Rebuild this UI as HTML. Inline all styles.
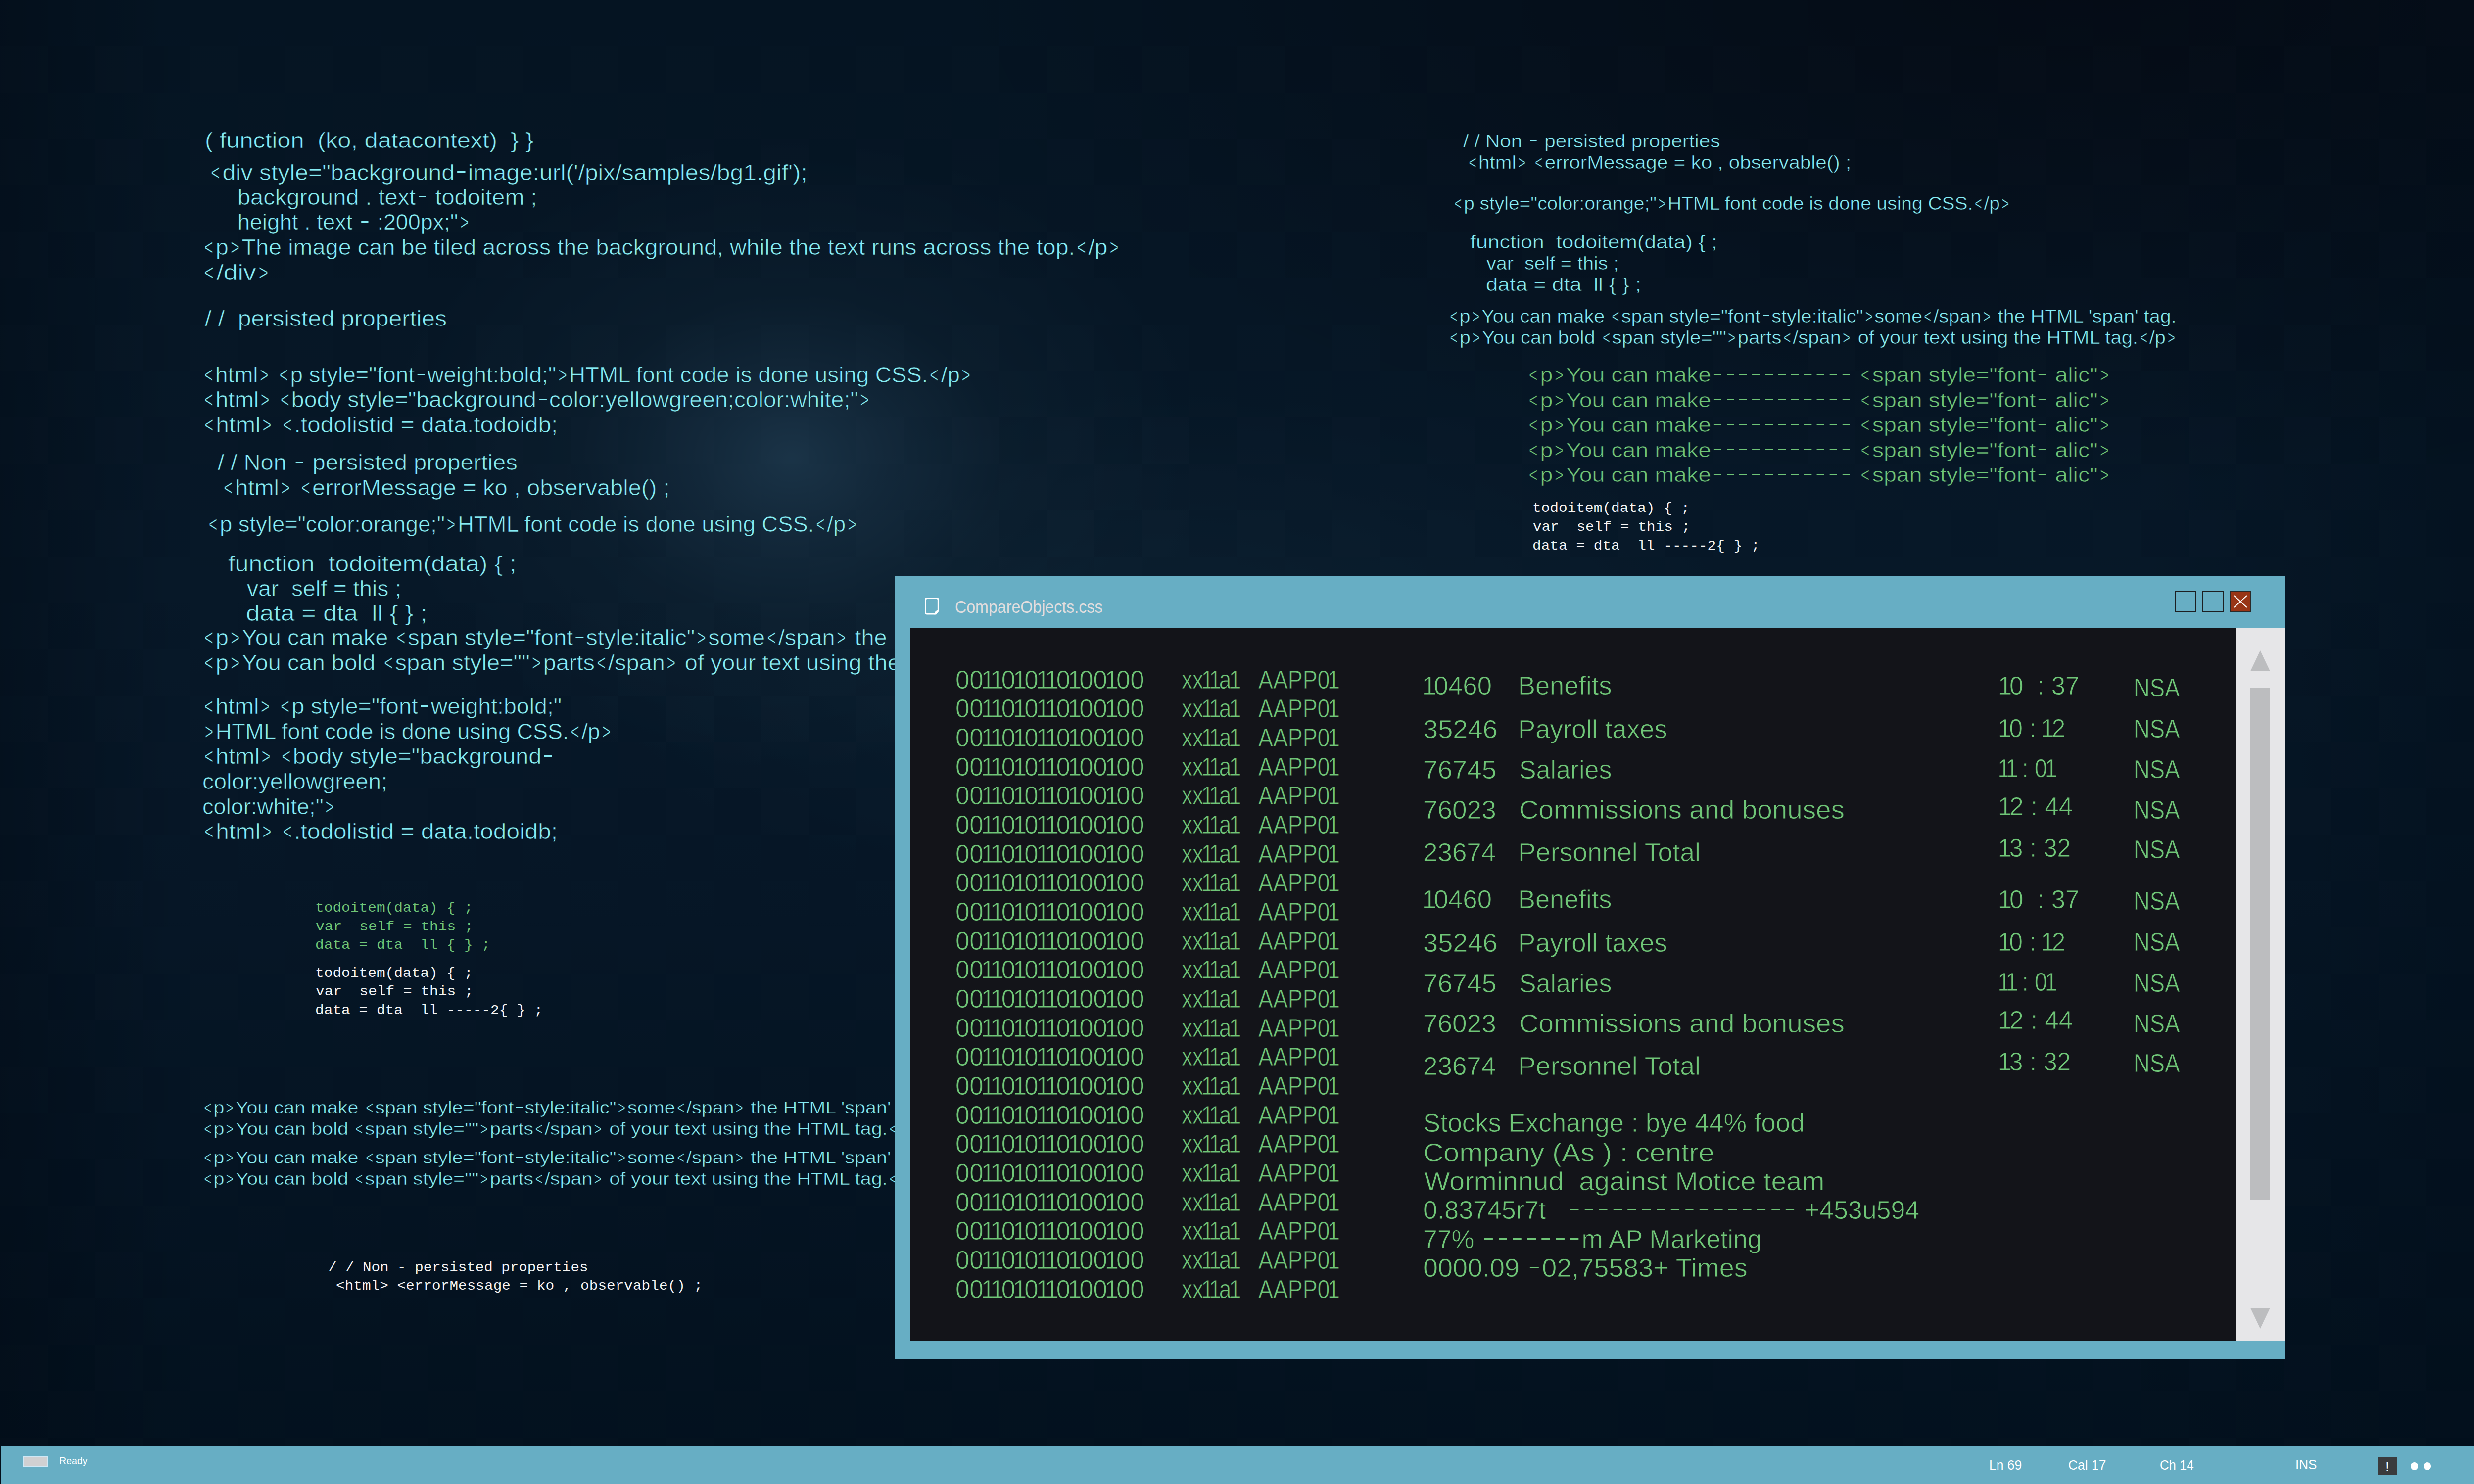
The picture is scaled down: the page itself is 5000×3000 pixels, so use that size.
<!DOCTYPE html>
<html><head><meta charset="utf-8">
<style>
html,body{margin:0;padding:0;width:5000px;height:3000px;overflow:hidden;}
body{position:relative;background:#06121e;font-family:"Liberation Sans",sans-serif;}
#bg{position:absolute;left:0;top:0;width:5000px;height:3000px;
 background:
  radial-gradient(ellipse 820px 640px at 1600px 928px, rgba(28,54,74,0.9) 0%, rgba(25,49,68,0.62) 24%, rgba(20,42,58,0.3) 52%, rgba(14,30,44,0) 100%),
  radial-gradient(ellipse 1200px 520px at 2350px 1300px, rgba(16,38,54,0.5) 0%, rgba(16,38,54,0) 100%),
  radial-gradient(ellipse 2300px 1100px at 4200px -100px, rgba(5,9,18,0.8) 0%, rgba(5,9,18,0) 100%),
  linear-gradient(270deg, rgba(2,14,26,0.5) 0px, rgba(2,14,26,0) 700px),
  linear-gradient(90deg, rgba(2,10,20,0.45) 0px, rgba(2,10,20,0) 350px),
  linear-gradient(180deg, #051422 0%, #071828 40%, #061626 62%, #03111e 100%);}
.s,.m{position:absolute;white-space:pre;line-height:1;transform-origin:0 0;}
.s{font-family:"Liberation Sans",sans-serif;}
.n1{margin:0 -0.1em}
.lt{display:inline-block;width:0.57em;padding-left:0.136em;box-sizing:border-box;transform:scaleX(0.646);transform-origin:0 0}
.dh{display:inline-block;width:0.33em;height:0.06em;margin:0 0.115em;background:currentColor;vertical-align:0.33em}
.m{font-family:"Liberation Mono",monospace;}
#topline{position:absolute;left:0;top:0;width:5000px;height:1px;background:#38414d;}
#win{position:absolute;left:1808px;top:1165px;width:2810px;height:1583px;background:#67aec4;}
#content{position:absolute;left:1839px;top:1270px;width:2680px;height:1440px;background:#131419;}
#sb{position:absolute;left:4518px;top:1270px;width:100px;height:1440px;background:#e6e6e8;border-left:2px solid #f8f8f8;box-sizing:border-box;}
#thumb{position:absolute;left:4548px;top:1391px;width:40px;height:1034px;background:#bcbdbf;}
.tri{position:absolute;width:0;height:0;border-left:20px solid transparent;border-right:20px solid transparent;}
#up{left:4548px;top:1315px;border-bottom:42px solid #bcbdbf;}
#down{left:4548px;top:2644px;border-top:42px solid #bcbdbf;}
.btn{position:absolute;top:1194px;width:43px;height:43px;box-sizing:border-box;border:2px solid #1c1f22;}
#status{position:absolute;left:2px;top:2923px;width:4998px;height:77px;background:#67aec4;}
.st{position:absolute;white-space:pre;line-height:1;color:#fff;font-family:"Liberation Sans",sans-serif;}
</style></head><body>
<div id="bg"></div>
<div id="topline"></div>
<div class="s" style="left:414.0px;top:261.6px;font-size:44px;color:#85ebf3;transform:scaleX(1.1085);-webkit-text-stroke:0.7px #051523">( function  (ko, datacontext)  } }</div>
<div class="s" style="left:421.6px;top:326.6px;font-size:44px;color:#85ebf3;transform:scaleX(1.0916);-webkit-text-stroke:0.7px #061524"><span class="lt">&lt;</span>div style=&quot;background<span class="dh"></span>image:url(&#x27;/pix/samples/bg1.gif&#x27;);</div>
<div class="s" style="left:480.2px;top:377.0px;font-size:44px;color:#85ebf3;transform:scaleX(1.0670);-webkit-text-stroke:0.7px #061524">background . text<span class="dh"></span> todoitem ;</div>
<div class="s" style="left:480.3px;top:427.2px;font-size:44px;color:#85ebf3;transform:scaleX(1.0212);-webkit-text-stroke:0.7px #061524">height . text <span class="dh"></span> :200px;&quot;<span class="lt">&gt;</span></div>
<div class="s" style="left:409.0px;top:478.0px;font-size:44px;color:#85ebf3;transform:scaleX(1.0643);-webkit-text-stroke:0.7px #071726"><span class="lt">&lt;</span>p<span class="lt">&gt;</span>The image can be tiled across the background, while the text runs across the top.<span class="lt">&lt;</span>/p<span class="lt">&gt;</span></div>
<div class="s" style="left:408.2px;top:528.6px;font-size:44px;color:#85ebf3;transform:scaleX(1.1722);-webkit-text-stroke:0.7px #061625"><span class="lt">&lt;</span>/div<span class="lt">&gt;</span></div>
<div class="s" style="left:413.6px;top:622.1px;font-size:44px;color:#85ebf3;transform:scaleX(1.0928);-webkit-text-stroke:0.7px #061625">/ /  persisted properties</div>
<div class="s" style="left:408.9px;top:735.7px;font-size:44px;color:#85ebf3;transform:scaleX(1.0398);-webkit-text-stroke:0.7px #091b2a"><span class="lt">&lt;</span>html<span class="lt">&gt;</span> <span class="lt">&lt;</span>p style=&quot;font<span class="dh"></span>weight:bold;&quot;<span class="lt">&gt;</span>HTML font code is done using CSS.<span class="lt">&lt;</span>/p<span class="lt">&gt;</span></div>
<div class="s" style="left:408.8px;top:786.3px;font-size:44px;color:#85ebf3;transform:scaleX(1.0544);-webkit-text-stroke:0.7px #091b2a"><span class="lt">&lt;</span>html<span class="lt">&gt;</span> <span class="lt">&lt;</span>body style=&quot;background<span class="dh"></span>color:yellowgreen;color:white;&quot;<span class="lt">&gt;</span></div>
<div class="s" style="left:408.7px;top:836.8px;font-size:44px;color:#85ebf3;transform:scaleX(1.0867);-webkit-text-stroke:0.7px #071727"><span class="lt">&lt;</span>html<span class="lt">&gt;</span> <span class="lt">&lt;</span>.todolistid = data.todoidb;</div>
<div class="s" style="left:440.3px;top:913.3px;font-size:44px;color:#85ebf3;transform:scaleX(1.0722);-webkit-text-stroke:0.7px #071727">/ / Non <span class="dh"></span> persisted properties</div>
<div class="s" style="left:448.4px;top:963.7px;font-size:44px;color:#85ebf3;transform:scaleX(1.0726);-webkit-text-stroke:0.7px #081929"><span class="lt">&lt;</span>html<span class="lt">&gt;</span> <span class="lt">&lt;</span>errorMessage = ko , observable() ;</div>
<div class="s" style="left:417.6px;top:1038.1px;font-size:44px;color:#85ebf3;transform:scaleX(1.0324);-webkit-text-stroke:0.7px #0a1b2b"><span class="lt">&lt;</span>p style=&quot;color:orange;&quot;<span class="lt">&gt;</span>HTML font code is done using CSS.<span class="lt">&lt;</span>/p<span class="lt">&gt;</span></div>
<div class="s" style="left:460.7px;top:1117.8px;font-size:44px;color:#85ebf3;transform:scaleX(1.1343);-webkit-text-stroke:0.7px #071828">function  todoitem(data) { ;</div>
<div class="s" style="left:499.0px;top:1167.6px;font-size:44px;color:#85ebf3;transform:scaleX(1.0503);-webkit-text-stroke:0.7px #071828">var  self = this ;</div>
<div class="s" style="left:496.7px;top:1218.1px;font-size:44px;color:#85ebf3;transform:scaleX(1.1481);-webkit-text-stroke:0.7px #071828">data = dta  ll { } ;</div>
<div class="s" style="left:409.3px;top:1267.4px;font-size:44px;color:#85ebf3;transform:scaleX(1.0670);-webkit-text-stroke:0.7px #081a2a"><span class="lt">&lt;</span>p<span class="lt">&gt;</span>You can make <span class="lt">&lt;</span>span style=&quot;font<span class="dh"></span>style:italic&quot;<span class="lt">&gt;</span>some<span class="lt">&lt;</span>/span<span class="lt">&gt;</span> the HTML &#x27;span&#x27; tag.</div>
<div class="s" style="left:409.3px;top:1317.5px;font-size:44px;color:#85ebf3;transform:scaleX(1.0678);-webkit-text-stroke:0.7px #081929"><span class="lt">&lt;</span>p<span class="lt">&gt;</span>You can bold <span class="lt">&lt;</span>span style=&quot;&quot;<span class="lt">&gt;</span>parts<span class="lt">&lt;</span>/span<span class="lt">&gt;</span> of your text using the HTML tag.<span class="lt">&lt;</span>/p<span class="lt">&gt;</span></div>
<div class="s" style="left:409.3px;top:1406.4px;font-size:44px;color:#85ebf3;transform:scaleX(1.0564);-webkit-text-stroke:0.7px #071727"><span class="lt">&lt;</span>html<span class="lt">&gt;</span> <span class="lt">&lt;</span>p style=&quot;font<span class="dh"></span>weight:bold;&quot;</div>
<div class="s" style="left:410.3px;top:1456.6px;font-size:44px;color:#85ebf3;transform:scaleX(1.0229);-webkit-text-stroke:0.7px #071727"><span class="lt">&gt;</span>HTML font code is done using CSS.<span class="lt">&lt;</span>/p<span class="lt">&gt;</span></div>
<div class="s" style="left:409.2px;top:1507.1px;font-size:44px;color:#85ebf3;transform:scaleX(1.0711);-webkit-text-stroke:0.7px #061727"><span class="lt">&lt;</span>html<span class="lt">&gt;</span> <span class="lt">&lt;</span>body style=&quot;background<span class="dh"></span></div>
<div class="s" style="left:408.5px;top:1558.2px;font-size:44px;color:#85ebf3;transform:scaleX(1.0547);-webkit-text-stroke:0.7px #061727">color:yellowgreen;</div>
<div class="s" style="left:408.5px;top:1608.5px;font-size:44px;color:#85ebf3;transform:scaleX(1.0275);-webkit-text-stroke:0.7px #061727">color:white;&quot;<span class="lt">&gt;</span></div>
<div class="s" style="left:409.2px;top:1658.8px;font-size:44px;color:#85ebf3;transform:scaleX(1.0862);-webkit-text-stroke:0.7px #061727"><span class="lt">&lt;</span>html<span class="lt">&gt;</span> <span class="lt">&lt;</span>.todolistid = data.todoidb;</div>
<div class="m" style="left:637.1px;top:1822.2px;font-size:28px;color:#6fc577;transform:scaleX(1.0535)">todoitem(data) { ;</div>
<div class="m" style="left:638.1px;top:1859.5px;font-size:28px;color:#6fc577;transform:scaleX(1.0535)">var  self = this ;</div>
<div class="m" style="left:637.1px;top:1896.9px;font-size:28px;color:#6fc577;transform:scaleX(1.0535)">data = dta  ll { } ;</div>
<div class="m" style="left:637.1px;top:1953.5px;font-size:28px;color:#f4f4f4;transform:scaleX(1.0535)">todoitem(data) { ;</div>
<div class="m" style="left:638.1px;top:1990.9px;font-size:28px;color:#f4f4f4;transform:scaleX(1.0535)">var  self = this ;</div>
<div class="m" style="left:637.1px;top:2029.3px;font-size:28px;color:#f4f4f4;transform:scaleX(1.0535)">data = dta  ll -----2{ } ;</div>
<div class="s" style="left:409.3px;top:2220.6px;font-size:35px;color:#85ebf3;transform:scaleX(1.1274);-webkit-text-stroke:0.56px #051423"><span class="lt">&lt;</span>p<span class="lt">&gt;</span>You can make <span class="lt">&lt;</span>span style=&quot;font<span class="dh"></span>style:italic&quot;<span class="lt">&gt;</span>some<span class="lt">&lt;</span>/span<span class="lt">&gt;</span> the HTML &#x27;span&#x27; tag.</div>
<div class="s" style="left:409.3px;top:2263.8px;font-size:35px;color:#85ebf3;transform:scaleX(1.1326);-webkit-text-stroke:0.56px #051423"><span class="lt">&lt;</span>p<span class="lt">&gt;</span>You can bold <span class="lt">&lt;</span>span style=&quot;&quot;<span class="lt">&gt;</span>parts<span class="lt">&lt;</span>/span<span class="lt">&gt;</span> of your text using the HTML tag.<span class="lt">&lt;</span>/p<span class="lt">&gt;</span></div>
<div class="s" style="left:409.3px;top:2321.8px;font-size:35px;color:#85ebf3;transform:scaleX(1.1274);-webkit-text-stroke:0.56px #051423"><span class="lt">&lt;</span>p<span class="lt">&gt;</span>You can make <span class="lt">&lt;</span>span style=&quot;font<span class="dh"></span>style:italic&quot;<span class="lt">&gt;</span>some<span class="lt">&lt;</span>/span<span class="lt">&gt;</span> the HTML &#x27;span&#x27; tag.</div>
<div class="s" style="left:409.3px;top:2365.1px;font-size:35px;color:#85ebf3;transform:scaleX(1.1326);-webkit-text-stroke:0.56px #051422"><span class="lt">&lt;</span>p<span class="lt">&gt;</span>You can bold <span class="lt">&lt;</span>span style=&quot;&quot;<span class="lt">&gt;</span>parts<span class="lt">&lt;</span>/span<span class="lt">&gt;</span> of your text using the HTML tag.<span class="lt">&lt;</span>/p<span class="lt">&gt;</span></div>
<div class="m" style="left:663.3px;top:2549.1px;font-size:28px;color:#f4f4f4;transform:scaleX(1.0423)">/ / Non - persisted properties</div>
<div class="m" style="left:679.3px;top:2585.7px;font-size:28px;color:#f4f4f4;transform:scaleX(1.0502)">&lt;html&gt; &lt;errorMessage = ko , observable() ;</div>
<div class="s" style="left:2957.4px;top:267.2px;font-size:37px;color:#85ebf3;transform:scaleX(1.0932);-webkit-text-stroke:0.59px #05111d">/ / Non <span class="dh"></span> persisted properties</div>
<div class="s" style="left:2964.7px;top:310.4px;font-size:37px;color:#85ebf3;transform:scaleX(1.0932);-webkit-text-stroke:0.59px #06111d"><span class="lt">&lt;</span>html<span class="lt">&gt;</span> <span class="lt">&lt;</span>errorMessage = ko , observable() ;</div>
<div class="s" style="left:2935.8px;top:392.9px;font-size:37px;color:#85ebf3;transform:scaleX(1.0515);-webkit-text-stroke:0.59px #06111e"><span class="lt">&lt;</span>p style=&quot;color:orange;&quot;<span class="lt">&gt;</span>HTML font code is done using CSS.<span class="lt">&lt;</span>/p<span class="lt">&gt;</span></div>
<div class="s" style="left:2971.4px;top:471.1px;font-size:37px;color:#85ebf3;transform:scaleX(1.1569);-webkit-text-stroke:0.59px #061320">function  todoitem(data) { ;</div>
<div class="s" style="left:3004.2px;top:514.1px;font-size:37px;color:#85ebf3;transform:scaleX(1.0709);-webkit-text-stroke:0.59px #061321">var  self = this ;</div>
<div class="s" style="left:3003.0px;top:557.4px;font-size:37px;color:#85ebf3;transform:scaleX(1.1691);-webkit-text-stroke:0.59px #061421">data = dta  ll { } ;</div>
<div class="s" style="left:2926.7px;top:620.5px;font-size:37px;color:#85ebf3;transform:scaleX(1.0690);-webkit-text-stroke:0.59px #061321"><span class="lt">&lt;</span>p<span class="lt">&gt;</span>You can make <span class="lt">&lt;</span>span style=&quot;font<span class="dh"></span>style:italic&quot;<span class="lt">&gt;</span>some<span class="lt">&lt;</span>/span<span class="lt">&gt;</span> the HTML &#x27;span&#x27; tag.</div>
<div class="s" style="left:2926.7px;top:663.5px;font-size:37px;color:#85ebf3;transform:scaleX(1.0784);-webkit-text-stroke:0.59px #061422"><span class="lt">&lt;</span>p<span class="lt">&gt;</span>You can bold <span class="lt">&lt;</span>span style=&quot;&quot;<span class="lt">&gt;</span>parts<span class="lt">&lt;</span>/span<span class="lt">&gt;</span> of your text using the HTML tag.<span class="lt">&lt;</span>/p<span class="lt">&gt;</span></div>
<div class="s" style="left:3086.4px;top:738.4px;font-size:41px;color:#6fc577;transform:scaleX(1.1348);-webkit-text-stroke:0.65px #061523"><span class="lt">&lt;</span>p<span class="lt">&gt;</span>You can make<span class="dh"></span><span class="dh"></span><span class="dh"></span><span class="dh"></span><span class="dh"></span><span class="dh"></span><span class="dh"></span><span class="dh"></span><span class="dh"></span><span class="dh"></span><span class="dh"></span> <span class="lt">&lt;</span>span style=&quot;font<span class="dh"></span> alic&quot;<span class="lt">&gt;</span></div>
<div class="s" style="left:3086.4px;top:788.9px;font-size:41px;color:#6fc577;transform:scaleX(1.1348);-webkit-text-stroke:0.65px #061524"><span class="lt">&lt;</span>p<span class="lt">&gt;</span>You can make<span class="dh"></span><span class="dh"></span><span class="dh"></span><span class="dh"></span><span class="dh"></span><span class="dh"></span><span class="dh"></span><span class="dh"></span><span class="dh"></span><span class="dh"></span><span class="dh"></span> <span class="lt">&lt;</span>span style=&quot;font<span class="dh"></span> alic&quot;<span class="lt">&gt;</span></div>
<div class="s" style="left:3086.4px;top:839.2px;font-size:41px;color:#6fc577;transform:scaleX(1.1348);-webkit-text-stroke:0.65px #061625"><span class="lt">&lt;</span>p<span class="lt">&gt;</span>You can make<span class="dh"></span><span class="dh"></span><span class="dh"></span><span class="dh"></span><span class="dh"></span><span class="dh"></span><span class="dh"></span><span class="dh"></span><span class="dh"></span><span class="dh"></span><span class="dh"></span> <span class="lt">&lt;</span>span style=&quot;font<span class="dh"></span> alic&quot;<span class="lt">&gt;</span></div>
<div class="s" style="left:3086.4px;top:889.5px;font-size:41px;color:#6fc577;transform:scaleX(1.1348);-webkit-text-stroke:0.65px #071626"><span class="lt">&lt;</span>p<span class="lt">&gt;</span>You can make<span class="dh"></span><span class="dh"></span><span class="dh"></span><span class="dh"></span><span class="dh"></span><span class="dh"></span><span class="dh"></span><span class="dh"></span><span class="dh"></span><span class="dh"></span><span class="dh"></span> <span class="lt">&lt;</span>span style=&quot;font<span class="dh"></span> alic&quot;<span class="lt">&gt;</span></div>
<div class="s" style="left:3086.4px;top:939.9px;font-size:41px;color:#6fc577;transform:scaleX(1.1348);-webkit-text-stroke:0.65px #071727"><span class="lt">&lt;</span>p<span class="lt">&gt;</span>You can make<span class="dh"></span><span class="dh"></span><span class="dh"></span><span class="dh"></span><span class="dh"></span><span class="dh"></span><span class="dh"></span><span class="dh"></span><span class="dh"></span><span class="dh"></span><span class="dh"></span> <span class="lt">&lt;</span>span style=&quot;font<span class="dh"></span> alic&quot;<span class="lt">&gt;</span></div>
<div class="m" style="left:3097.1px;top:1014.2px;font-size:28px;color:#f4f4f4;transform:scaleX(1.0522)">todoitem(data) { ;</div>
<div class="m" style="left:3098.1px;top:1051.9px;font-size:28px;color:#f4f4f4;transform:scaleX(1.0522)">var  self = this ;</div>
<div class="m" style="left:3097.1px;top:1089.5px;font-size:28px;color:#f4f4f4;transform:scaleX(1.0522)">data = dta  ll -----2{ } ;</div>
<div id="win"></div>
<div id="content"></div>
<div id="sb"></div>
<div id="thumb"></div>
<div id="up" class="tri"></div>
<div id="down" class="tri"></div>
<div class="s" style="left:1930.7px;top:1348.7px;font-size:51px;color:#6fc577;transform:scaleX(0.9971);-webkit-text-stroke:0.81px #131419">00<span class="n1">1</span><span class="n1">1</span>0<span class="n1">1</span>0<span class="n1">1</span><span class="n1">1</span>0<span class="n1">1</span>00<span class="n1">1</span>00</div>
<div class="s" style="left:2387.7px;top:1348.7px;font-size:51px;color:#6fc577;transform:scaleX(0.8662);-webkit-text-stroke:0.81px #131419">xx<span class="n1">1</span><span class="n1">1</span>a<span class="n1">1</span></div>
<div class="s" style="left:2543.2px;top:1348.7px;font-size:51px;color:#6fc577;transform:scaleX(0.8784);-webkit-text-stroke:0.81px #131419">AAPP0<span class="n1">1</span></div>
<div class="s" style="left:1930.7px;top:1407.3px;font-size:51px;color:#6fc577;transform:scaleX(0.9971);-webkit-text-stroke:0.81px #131419">00<span class="n1">1</span><span class="n1">1</span>0<span class="n1">1</span>0<span class="n1">1</span><span class="n1">1</span>0<span class="n1">1</span>00<span class="n1">1</span>00</div>
<div class="s" style="left:2387.7px;top:1407.3px;font-size:51px;color:#6fc577;transform:scaleX(0.8662);-webkit-text-stroke:0.81px #131419">xx<span class="n1">1</span><span class="n1">1</span>a<span class="n1">1</span></div>
<div class="s" style="left:2543.2px;top:1407.3px;font-size:51px;color:#6fc577;transform:scaleX(0.8784);-webkit-text-stroke:0.81px #131419">AAPP0<span class="n1">1</span></div>
<div class="s" style="left:1930.7px;top:1466.0px;font-size:51px;color:#6fc577;transform:scaleX(0.9971);-webkit-text-stroke:0.81px #131419">00<span class="n1">1</span><span class="n1">1</span>0<span class="n1">1</span>0<span class="n1">1</span><span class="n1">1</span>0<span class="n1">1</span>00<span class="n1">1</span>00</div>
<div class="s" style="left:2387.7px;top:1466.0px;font-size:51px;color:#6fc577;transform:scaleX(0.8662);-webkit-text-stroke:0.81px #131419">xx<span class="n1">1</span><span class="n1">1</span>a<span class="n1">1</span></div>
<div class="s" style="left:2543.2px;top:1466.0px;font-size:51px;color:#6fc577;transform:scaleX(0.8784);-webkit-text-stroke:0.81px #131419">AAPP0<span class="n1">1</span></div>
<div class="s" style="left:1930.7px;top:1524.6px;font-size:51px;color:#6fc577;transform:scaleX(0.9971);-webkit-text-stroke:0.81px #131419">00<span class="n1">1</span><span class="n1">1</span>0<span class="n1">1</span>0<span class="n1">1</span><span class="n1">1</span>0<span class="n1">1</span>00<span class="n1">1</span>00</div>
<div class="s" style="left:2387.7px;top:1524.6px;font-size:51px;color:#6fc577;transform:scaleX(0.8662);-webkit-text-stroke:0.81px #131419">xx<span class="n1">1</span><span class="n1">1</span>a<span class="n1">1</span></div>
<div class="s" style="left:2543.2px;top:1524.6px;font-size:51px;color:#6fc577;transform:scaleX(0.8784);-webkit-text-stroke:0.81px #131419">AAPP0<span class="n1">1</span></div>
<div class="s" style="left:1930.7px;top:1583.3px;font-size:51px;color:#6fc577;transform:scaleX(0.9971);-webkit-text-stroke:0.81px #131419">00<span class="n1">1</span><span class="n1">1</span>0<span class="n1">1</span>0<span class="n1">1</span><span class="n1">1</span>0<span class="n1">1</span>00<span class="n1">1</span>00</div>
<div class="s" style="left:2387.7px;top:1583.3px;font-size:51px;color:#6fc577;transform:scaleX(0.8662);-webkit-text-stroke:0.81px #131419">xx<span class="n1">1</span><span class="n1">1</span>a<span class="n1">1</span></div>
<div class="s" style="left:2543.2px;top:1583.3px;font-size:51px;color:#6fc577;transform:scaleX(0.8784);-webkit-text-stroke:0.81px #131419">AAPP0<span class="n1">1</span></div>
<div class="s" style="left:1930.7px;top:1642.0px;font-size:51px;color:#6fc577;transform:scaleX(0.9971);-webkit-text-stroke:0.81px #131419">00<span class="n1">1</span><span class="n1">1</span>0<span class="n1">1</span>0<span class="n1">1</span><span class="n1">1</span>0<span class="n1">1</span>00<span class="n1">1</span>00</div>
<div class="s" style="left:2387.7px;top:1642.0px;font-size:51px;color:#6fc577;transform:scaleX(0.8662);-webkit-text-stroke:0.81px #131419">xx<span class="n1">1</span><span class="n1">1</span>a<span class="n1">1</span></div>
<div class="s" style="left:2543.2px;top:1642.0px;font-size:51px;color:#6fc577;transform:scaleX(0.8784);-webkit-text-stroke:0.81px #131419">AAPP0<span class="n1">1</span></div>
<div class="s" style="left:1930.7px;top:1700.6px;font-size:51px;color:#6fc577;transform:scaleX(0.9971);-webkit-text-stroke:0.81px #131419">00<span class="n1">1</span><span class="n1">1</span>0<span class="n1">1</span>0<span class="n1">1</span><span class="n1">1</span>0<span class="n1">1</span>00<span class="n1">1</span>00</div>
<div class="s" style="left:2387.7px;top:1700.6px;font-size:51px;color:#6fc577;transform:scaleX(0.8662);-webkit-text-stroke:0.81px #131419">xx<span class="n1">1</span><span class="n1">1</span>a<span class="n1">1</span></div>
<div class="s" style="left:2543.2px;top:1700.6px;font-size:51px;color:#6fc577;transform:scaleX(0.8784);-webkit-text-stroke:0.81px #131419">AAPP0<span class="n1">1</span></div>
<div class="s" style="left:1930.7px;top:1759.3px;font-size:51px;color:#6fc577;transform:scaleX(0.9971);-webkit-text-stroke:0.81px #131419">00<span class="n1">1</span><span class="n1">1</span>0<span class="n1">1</span>0<span class="n1">1</span><span class="n1">1</span>0<span class="n1">1</span>00<span class="n1">1</span>00</div>
<div class="s" style="left:2387.7px;top:1759.3px;font-size:51px;color:#6fc577;transform:scaleX(0.8662);-webkit-text-stroke:0.81px #131419">xx<span class="n1">1</span><span class="n1">1</span>a<span class="n1">1</span></div>
<div class="s" style="left:2543.2px;top:1759.3px;font-size:51px;color:#6fc577;transform:scaleX(0.8784);-webkit-text-stroke:0.81px #131419">AAPP0<span class="n1">1</span></div>
<div class="s" style="left:1930.7px;top:1817.9px;font-size:51px;color:#6fc577;transform:scaleX(0.9971);-webkit-text-stroke:0.81px #131419">00<span class="n1">1</span><span class="n1">1</span>0<span class="n1">1</span>0<span class="n1">1</span><span class="n1">1</span>0<span class="n1">1</span>00<span class="n1">1</span>00</div>
<div class="s" style="left:2387.7px;top:1817.9px;font-size:51px;color:#6fc577;transform:scaleX(0.8662);-webkit-text-stroke:0.81px #131419">xx<span class="n1">1</span><span class="n1">1</span>a<span class="n1">1</span></div>
<div class="s" style="left:2543.2px;top:1817.9px;font-size:51px;color:#6fc577;transform:scaleX(0.8784);-webkit-text-stroke:0.81px #131419">AAPP0<span class="n1">1</span></div>
<div class="s" style="left:1930.7px;top:1876.6px;font-size:51px;color:#6fc577;transform:scaleX(0.9971);-webkit-text-stroke:0.81px #131419">00<span class="n1">1</span><span class="n1">1</span>0<span class="n1">1</span>0<span class="n1">1</span><span class="n1">1</span>0<span class="n1">1</span>00<span class="n1">1</span>00</div>
<div class="s" style="left:2387.7px;top:1876.6px;font-size:51px;color:#6fc577;transform:scaleX(0.8662);-webkit-text-stroke:0.81px #131419">xx<span class="n1">1</span><span class="n1">1</span>a<span class="n1">1</span></div>
<div class="s" style="left:2543.2px;top:1876.6px;font-size:51px;color:#6fc577;transform:scaleX(0.8784);-webkit-text-stroke:0.81px #131419">AAPP0<span class="n1">1</span></div>
<div class="s" style="left:1930.7px;top:1935.2px;font-size:51px;color:#6fc577;transform:scaleX(0.9971);-webkit-text-stroke:0.81px #131419">00<span class="n1">1</span><span class="n1">1</span>0<span class="n1">1</span>0<span class="n1">1</span><span class="n1">1</span>0<span class="n1">1</span>00<span class="n1">1</span>00</div>
<div class="s" style="left:2387.7px;top:1935.2px;font-size:51px;color:#6fc577;transform:scaleX(0.8662);-webkit-text-stroke:0.81px #131419">xx<span class="n1">1</span><span class="n1">1</span>a<span class="n1">1</span></div>
<div class="s" style="left:2543.2px;top:1935.2px;font-size:51px;color:#6fc577;transform:scaleX(0.8784);-webkit-text-stroke:0.81px #131419">AAPP0<span class="n1">1</span></div>
<div class="s" style="left:1930.7px;top:1993.9px;font-size:51px;color:#6fc577;transform:scaleX(0.9971);-webkit-text-stroke:0.81px #131419">00<span class="n1">1</span><span class="n1">1</span>0<span class="n1">1</span>0<span class="n1">1</span><span class="n1">1</span>0<span class="n1">1</span>00<span class="n1">1</span>00</div>
<div class="s" style="left:2387.7px;top:1993.9px;font-size:51px;color:#6fc577;transform:scaleX(0.8662);-webkit-text-stroke:0.81px #131419">xx<span class="n1">1</span><span class="n1">1</span>a<span class="n1">1</span></div>
<div class="s" style="left:2543.2px;top:1993.9px;font-size:51px;color:#6fc577;transform:scaleX(0.8784);-webkit-text-stroke:0.81px #131419">AAPP0<span class="n1">1</span></div>
<div class="s" style="left:1930.7px;top:2052.6px;font-size:51px;color:#6fc577;transform:scaleX(0.9971);-webkit-text-stroke:0.81px #131419">00<span class="n1">1</span><span class="n1">1</span>0<span class="n1">1</span>0<span class="n1">1</span><span class="n1">1</span>0<span class="n1">1</span>00<span class="n1">1</span>00</div>
<div class="s" style="left:2387.7px;top:2052.6px;font-size:51px;color:#6fc577;transform:scaleX(0.8662);-webkit-text-stroke:0.81px #131419">xx<span class="n1">1</span><span class="n1">1</span>a<span class="n1">1</span></div>
<div class="s" style="left:2543.2px;top:2052.6px;font-size:51px;color:#6fc577;transform:scaleX(0.8784);-webkit-text-stroke:0.81px #131419">AAPP0<span class="n1">1</span></div>
<div class="s" style="left:1930.7px;top:2111.2px;font-size:51px;color:#6fc577;transform:scaleX(0.9971);-webkit-text-stroke:0.81px #131419">00<span class="n1">1</span><span class="n1">1</span>0<span class="n1">1</span>0<span class="n1">1</span><span class="n1">1</span>0<span class="n1">1</span>00<span class="n1">1</span>00</div>
<div class="s" style="left:2387.7px;top:2111.2px;font-size:51px;color:#6fc577;transform:scaleX(0.8662);-webkit-text-stroke:0.81px #131419">xx<span class="n1">1</span><span class="n1">1</span>a<span class="n1">1</span></div>
<div class="s" style="left:2543.2px;top:2111.2px;font-size:51px;color:#6fc577;transform:scaleX(0.8784);-webkit-text-stroke:0.81px #131419">AAPP0<span class="n1">1</span></div>
<div class="s" style="left:1930.7px;top:2169.9px;font-size:51px;color:#6fc577;transform:scaleX(0.9971);-webkit-text-stroke:0.81px #131419">00<span class="n1">1</span><span class="n1">1</span>0<span class="n1">1</span>0<span class="n1">1</span><span class="n1">1</span>0<span class="n1">1</span>00<span class="n1">1</span>00</div>
<div class="s" style="left:2387.7px;top:2169.9px;font-size:51px;color:#6fc577;transform:scaleX(0.8662);-webkit-text-stroke:0.81px #131419">xx<span class="n1">1</span><span class="n1">1</span>a<span class="n1">1</span></div>
<div class="s" style="left:2543.2px;top:2169.9px;font-size:51px;color:#6fc577;transform:scaleX(0.8784);-webkit-text-stroke:0.81px #131419">AAPP0<span class="n1">1</span></div>
<div class="s" style="left:1930.7px;top:2228.6px;font-size:51px;color:#6fc577;transform:scaleX(0.9971);-webkit-text-stroke:0.81px #131419">00<span class="n1">1</span><span class="n1">1</span>0<span class="n1">1</span>0<span class="n1">1</span><span class="n1">1</span>0<span class="n1">1</span>00<span class="n1">1</span>00</div>
<div class="s" style="left:2387.7px;top:2228.6px;font-size:51px;color:#6fc577;transform:scaleX(0.8662);-webkit-text-stroke:0.81px #131419">xx<span class="n1">1</span><span class="n1">1</span>a<span class="n1">1</span></div>
<div class="s" style="left:2543.2px;top:2228.6px;font-size:51px;color:#6fc577;transform:scaleX(0.8784);-webkit-text-stroke:0.81px #131419">AAPP0<span class="n1">1</span></div>
<div class="s" style="left:1930.7px;top:2287.2px;font-size:51px;color:#6fc577;transform:scaleX(0.9971);-webkit-text-stroke:0.81px #131419">00<span class="n1">1</span><span class="n1">1</span>0<span class="n1">1</span>0<span class="n1">1</span><span class="n1">1</span>0<span class="n1">1</span>00<span class="n1">1</span>00</div>
<div class="s" style="left:2387.7px;top:2287.2px;font-size:51px;color:#6fc577;transform:scaleX(0.8662);-webkit-text-stroke:0.81px #131419">xx<span class="n1">1</span><span class="n1">1</span>a<span class="n1">1</span></div>
<div class="s" style="left:2543.2px;top:2287.2px;font-size:51px;color:#6fc577;transform:scaleX(0.8784);-webkit-text-stroke:0.81px #131419">AAPP0<span class="n1">1</span></div>
<div class="s" style="left:1930.7px;top:2345.9px;font-size:51px;color:#6fc577;transform:scaleX(0.9971);-webkit-text-stroke:0.81px #131419">00<span class="n1">1</span><span class="n1">1</span>0<span class="n1">1</span>0<span class="n1">1</span><span class="n1">1</span>0<span class="n1">1</span>00<span class="n1">1</span>00</div>
<div class="s" style="left:2387.7px;top:2345.9px;font-size:51px;color:#6fc577;transform:scaleX(0.8662);-webkit-text-stroke:0.81px #131419">xx<span class="n1">1</span><span class="n1">1</span>a<span class="n1">1</span></div>
<div class="s" style="left:2543.2px;top:2345.9px;font-size:51px;color:#6fc577;transform:scaleX(0.8784);-webkit-text-stroke:0.81px #131419">AAPP0<span class="n1">1</span></div>
<div class="s" style="left:1930.7px;top:2404.5px;font-size:51px;color:#6fc577;transform:scaleX(0.9971);-webkit-text-stroke:0.81px #131419">00<span class="n1">1</span><span class="n1">1</span>0<span class="n1">1</span>0<span class="n1">1</span><span class="n1">1</span>0<span class="n1">1</span>00<span class="n1">1</span>00</div>
<div class="s" style="left:2387.7px;top:2404.5px;font-size:51px;color:#6fc577;transform:scaleX(0.8662);-webkit-text-stroke:0.81px #131419">xx<span class="n1">1</span><span class="n1">1</span>a<span class="n1">1</span></div>
<div class="s" style="left:2543.2px;top:2404.5px;font-size:51px;color:#6fc577;transform:scaleX(0.8784);-webkit-text-stroke:0.81px #131419">AAPP0<span class="n1">1</span></div>
<div class="s" style="left:1930.7px;top:2463.2px;font-size:51px;color:#6fc577;transform:scaleX(0.9971);-webkit-text-stroke:0.81px #131419">00<span class="n1">1</span><span class="n1">1</span>0<span class="n1">1</span>0<span class="n1">1</span><span class="n1">1</span>0<span class="n1">1</span>00<span class="n1">1</span>00</div>
<div class="s" style="left:2387.7px;top:2463.2px;font-size:51px;color:#6fc577;transform:scaleX(0.8662);-webkit-text-stroke:0.81px #131419">xx<span class="n1">1</span><span class="n1">1</span>a<span class="n1">1</span></div>
<div class="s" style="left:2543.2px;top:2463.2px;font-size:51px;color:#6fc577;transform:scaleX(0.8784);-webkit-text-stroke:0.81px #131419">AAPP0<span class="n1">1</span></div>
<div class="s" style="left:1930.7px;top:2521.8px;font-size:51px;color:#6fc577;transform:scaleX(0.9971);-webkit-text-stroke:0.81px #131419">00<span class="n1">1</span><span class="n1">1</span>0<span class="n1">1</span>0<span class="n1">1</span><span class="n1">1</span>0<span class="n1">1</span>00<span class="n1">1</span>00</div>
<div class="s" style="left:2387.7px;top:2521.8px;font-size:51px;color:#6fc577;transform:scaleX(0.8662);-webkit-text-stroke:0.81px #131419">xx<span class="n1">1</span><span class="n1">1</span>a<span class="n1">1</span></div>
<div class="s" style="left:2543.2px;top:2521.8px;font-size:51px;color:#6fc577;transform:scaleX(0.8784);-webkit-text-stroke:0.81px #131419">AAPP0<span class="n1">1</span></div>
<div class="s" style="left:1930.7px;top:2580.5px;font-size:51px;color:#6fc577;transform:scaleX(0.9971);-webkit-text-stroke:0.81px #131419">00<span class="n1">1</span><span class="n1">1</span>0<span class="n1">1</span>0<span class="n1">1</span><span class="n1">1</span>0<span class="n1">1</span>00<span class="n1">1</span>00</div>
<div class="s" style="left:2387.7px;top:2580.5px;font-size:51px;color:#6fc577;transform:scaleX(0.8662);-webkit-text-stroke:0.81px #131419">xx<span class="n1">1</span><span class="n1">1</span>a<span class="n1">1</span></div>
<div class="s" style="left:2543.2px;top:2580.5px;font-size:51px;color:#6fc577;transform:scaleX(0.8784);-webkit-text-stroke:0.81px #131419">AAPP0<span class="n1">1</span></div>
<div class="s" style="left:2879.3px;top:1361.2px;font-size:51px;color:#6fc577;transform:scaleX(1.0328);-webkit-text-stroke:0.81px #131419"><span class="n1">1</span>0460</div>
<div class="s" style="left:3067.9px;top:1361.2px;font-size:51px;color:#6fc577;transform:scaleX(1.0279);-webkit-text-stroke:0.81px #131419">Benefits</div>
<div class="s" style="left:4042.5px;top:1361.1px;font-size:51px;color:#6fc577;transform:scaleX(0.9962);-webkit-text-stroke:0.81px #131419"><span class="n1">1</span>0  : 37</div>
<div class="s" style="left:4312.4px;top:1364.5px;font-size:51px;color:#6fc577;transform:scaleX(0.8911);-webkit-text-stroke:0.81px #131419">NSA</div>
<div class="s" style="left:2876.2px;top:1449.2px;font-size:51px;color:#6fc577;transform:scaleX(1.0623);-webkit-text-stroke:0.81px #131419">35246</div>
<div class="s" style="left:3067.9px;top:1449.2px;font-size:51px;color:#6fc577;transform:scaleX(1.0332);-webkit-text-stroke:0.81px #131419">Payroll taxes</div>
<div class="s" style="left:4042.5px;top:1447.1px;font-size:51px;color:#6fc577;transform:scaleX(0.9679);-webkit-text-stroke:0.81px #131419"><span class="n1">1</span>0 : <span class="n1">1</span>2</div>
<div class="s" style="left:4312.4px;top:1447.7px;font-size:51px;color:#6fc577;transform:scaleX(0.8911);-webkit-text-stroke:0.81px #131419">NSA</div>
<div class="s" style="left:2876.2px;top:1531.0px;font-size:51px;color:#6fc577;transform:scaleX(1.0457);-webkit-text-stroke:0.81px #131419">76745</div>
<div class="s" style="left:3070.0px;top:1531.0px;font-size:51px;color:#6fc577;transform:scaleX(1.0166);-webkit-text-stroke:0.81px #131419">Salaries</div>
<div class="s" style="left:4042.4px;top:1527.9px;font-size:51px;color:#6fc577;transform:scaleX(0.8876);-webkit-text-stroke:0.81px #131419"><span class="n1">1</span><span class="n1">1</span> : 0<span class="n1">1</span></div>
<div class="s" style="left:4312.4px;top:1530.2px;font-size:51px;color:#6fc577;transform:scaleX(0.8911);-webkit-text-stroke:0.81px #131419">NSA</div>
<div class="s" style="left:2876.2px;top:1611.9px;font-size:51px;color:#6fc577;transform:scaleX(1.0413);-webkit-text-stroke:0.81px #131419">76023</div>
<div class="s" style="left:3069.9px;top:1611.9px;font-size:51px;color:#6fc577;transform:scaleX(1.0745);-webkit-text-stroke:0.81px #131419">Commissions and bonuses</div>
<div class="s" style="left:4042.5px;top:1605.4px;font-size:51px;color:#6fc577;transform:scaleX(1.0034);-webkit-text-stroke:0.81px #131419"><span class="n1">1</span>2 : 44</div>
<div class="s" style="left:4312.4px;top:1612.2px;font-size:51px;color:#6fc577;transform:scaleX(0.8911);-webkit-text-stroke:0.81px #131419">NSA</div>
<div class="s" style="left:2876.2px;top:1697.9px;font-size:51px;color:#6fc577;transform:scaleX(1.0381);-webkit-text-stroke:0.81px #131419">23674</div>
<div class="s" style="left:3067.8px;top:1697.9px;font-size:51px;color:#6fc577;transform:scaleX(1.0525);-webkit-text-stroke:0.81px #131419">Personnel Total</div>
<div class="s" style="left:4042.5px;top:1689.0px;font-size:51px;color:#6fc577;transform:scaleX(0.9759);-webkit-text-stroke:0.81px #131419"><span class="n1">1</span>3 : 32</div>
<div class="s" style="left:4312.4px;top:1692.2px;font-size:51px;color:#6fc577;transform:scaleX(0.8911);-webkit-text-stroke:0.81px #131419">NSA</div>
<div class="s" style="left:2879.3px;top:1792.9px;font-size:51px;color:#6fc577;transform:scaleX(1.0328);-webkit-text-stroke:0.81px #131419"><span class="n1">1</span>0460</div>
<div class="s" style="left:3067.9px;top:1792.9px;font-size:51px;color:#6fc577;transform:scaleX(1.0279);-webkit-text-stroke:0.81px #131419">Benefits</div>
<div class="s" style="left:4042.5px;top:1792.8px;font-size:51px;color:#6fc577;transform:scaleX(0.9962);-webkit-text-stroke:0.81px #131419"><span class="n1">1</span>0  : 37</div>
<div class="s" style="left:4312.4px;top:1796.2px;font-size:51px;color:#6fc577;transform:scaleX(0.8911);-webkit-text-stroke:0.81px #131419">NSA</div>
<div class="s" style="left:2876.2px;top:1880.9px;font-size:51px;color:#6fc577;transform:scaleX(1.0623);-webkit-text-stroke:0.81px #131419">35246</div>
<div class="s" style="left:3067.9px;top:1880.9px;font-size:51px;color:#6fc577;transform:scaleX(1.0332);-webkit-text-stroke:0.81px #131419">Payroll taxes</div>
<div class="s" style="left:4042.5px;top:1878.8px;font-size:51px;color:#6fc577;transform:scaleX(0.9679);-webkit-text-stroke:0.81px #131419"><span class="n1">1</span>0 : <span class="n1">1</span>2</div>
<div class="s" style="left:4312.4px;top:1879.4px;font-size:51px;color:#6fc577;transform:scaleX(0.8911);-webkit-text-stroke:0.81px #131419">NSA</div>
<div class="s" style="left:2876.2px;top:1962.7px;font-size:51px;color:#6fc577;transform:scaleX(1.0457);-webkit-text-stroke:0.81px #131419">76745</div>
<div class="s" style="left:3070.0px;top:1962.7px;font-size:51px;color:#6fc577;transform:scaleX(1.0166);-webkit-text-stroke:0.81px #131419">Salaries</div>
<div class="s" style="left:4042.4px;top:1959.6px;font-size:51px;color:#6fc577;transform:scaleX(0.8876);-webkit-text-stroke:0.81px #131419"><span class="n1">1</span><span class="n1">1</span> : 0<span class="n1">1</span></div>
<div class="s" style="left:4312.4px;top:1962.0px;font-size:51px;color:#6fc577;transform:scaleX(0.8911);-webkit-text-stroke:0.81px #131419">NSA</div>
<div class="s" style="left:2876.2px;top:2043.6px;font-size:51px;color:#6fc577;transform:scaleX(1.0413);-webkit-text-stroke:0.81px #131419">76023</div>
<div class="s" style="left:3069.9px;top:2043.6px;font-size:51px;color:#6fc577;transform:scaleX(1.0745);-webkit-text-stroke:0.81px #131419">Commissions and bonuses</div>
<div class="s" style="left:4042.5px;top:2037.1px;font-size:51px;color:#6fc577;transform:scaleX(1.0034);-webkit-text-stroke:0.81px #131419"><span class="n1">1</span>2 : 44</div>
<div class="s" style="left:4312.4px;top:2043.8px;font-size:51px;color:#6fc577;transform:scaleX(0.8911);-webkit-text-stroke:0.81px #131419">NSA</div>
<div class="s" style="left:2876.2px;top:2129.6px;font-size:51px;color:#6fc577;transform:scaleX(1.0381);-webkit-text-stroke:0.81px #131419">23674</div>
<div class="s" style="left:3067.8px;top:2129.6px;font-size:51px;color:#6fc577;transform:scaleX(1.0525);-webkit-text-stroke:0.81px #131419">Personnel Total</div>
<div class="s" style="left:4042.5px;top:2120.7px;font-size:51px;color:#6fc577;transform:scaleX(0.9759);-webkit-text-stroke:0.81px #131419"><span class="n1">1</span>3 : 32</div>
<div class="s" style="left:4312.4px;top:2123.9px;font-size:51px;color:#6fc577;transform:scaleX(0.8911);-webkit-text-stroke:0.81px #131419">NSA</div>
<div class="s" style="left:2876.2px;top:2245.3px;font-size:51px;color:#6fc577;transform:scaleX(1.0303);-webkit-text-stroke:0.81px #131419">Stocks Exchange : bye 44% food</div>
<div class="s" style="left:2876.1px;top:2304.7px;font-size:51px;color:#6fc577;transform:scaleX(1.1225);-webkit-text-stroke:0.81px #131419">Company (As ) : centre</div>
<div class="s" style="left:2878.3px;top:2362.7px;font-size:51px;color:#6fc577;transform:scaleX(1.0870);-webkit-text-stroke:0.81px #131419">Worminnud  against Motice team</div>
<div class="s" style="left:2876.3px;top:2420.7px;font-size:51px;color:#6fc577;transform:scaleX(1.0178);-webkit-text-stroke:0.81px #131419">0.83745r7t   <span class="dh"></span><span class="dh"></span><span class="dh"></span><span class="dh"></span><span class="dh"></span><span class="dh"></span><span class="dh"></span><span class="dh"></span><span class="dh"></span><span class="dh"></span><span class="dh"></span><span class="dh"></span><span class="dh"></span><span class="dh"></span><span class="dh"></span><span class="dh"></span> +453u594</div>
<div class="s" style="left:2876.3px;top:2479.7px;font-size:51px;color:#6fc577;transform:scaleX(1.0139);-webkit-text-stroke:0.81px #131419">77% <span class="dh"></span><span class="dh"></span><span class="dh"></span><span class="dh"></span><span class="dh"></span><span class="dh"></span><span class="dh"></span>m AP Marketing</div>
<div class="s" style="left:2876.2px;top:2537.7px;font-size:51px;color:#6fc577;transform:scaleX(1.0580);-webkit-text-stroke:0.81px #131419">0000.09 <span class="dh"></span>02,75583+ Times</div>
<div class="s" style="left:1929.5px;top:1208.5px;font-size:35px;color:#e2dedf;transform:scaleX(0.9189)">CompareObjects.css</div>
<div class="btn" style="left:4396px"></div>
<div class="btn" style="left:4451px"></div>
<div class="btn" style="left:4506px;background:#983516;border-color:#2a2a2a"></div>
<svg style="position:absolute;left:4506px;top:1194px" width="43" height="43"><path d="M9 10 L35 34 M35 10 L9 34" stroke="#fff" stroke-width="2"/></svg>
<svg style="position:absolute;left:1866px;top:1205px" width="36" height="42"><path d="M7.5 4.5 H27.3 Q30.3 4.5 30.3 7.5 V28.7 L23.2 36 H7.5 Q4.5 36 4.5 33 V7.5 Q4.5 4.5 7.5 4.5 Z" fill="none" stroke="#fff" stroke-width="2.9" stroke-linejoin="round"/><path d="M31.7 27.5 L31.7 30.5 L26 37.4 L22.5 37.4 Q23 29 31.7 27.5 Z" fill="#fff"/></svg>
<div id="status"></div>
<div style="position:absolute;left:46px;top:2944px;width:50px;height:21px;box-sizing:border-box;background:#d0d0d2;border:2px solid #cfe8f6"></div>
<div class="s" style="left:119.9px;top:2941.5px;font-size:21px;color:#ffffff;transform:scaleX(0.9333)">Ready</div>
<div class="s" style="left:4019.8px;top:2948.5px;font-size:27px;color:#ffffff;transform:scaleX(0.9800)">Ln 69</div>
<div class="s" style="left:4180.3px;top:2948.5px;font-size:27px;color:#ffffff;transform:scaleX(0.9789)">Cal 17</div>
<div class="s" style="left:4365.2px;top:2948.5px;font-size:27px;color:#ffffff;transform:scaleX(0.9535)">Ch 14</div>
<div class="s" style="left:4638.8px;top:2948.4px;font-size:27px;color:#ffffff;transform:scaleX(0.9667)">INS</div>
<div style="position:absolute;left:4806px;top:2945px;width:38px;height:37px;background:#3a3b3d"></div>
<div class="st" style="left:4821px;top:2951px;font-size:28px">!</div>
<div style="position:absolute;left:4871.5px;top:2956px;width:15.5px;height:15.5px;border-radius:50%;background:#fff"></div>
<div style="position:absolute;left:4897.5px;top:2956px;width:15.5px;height:15.5px;border-radius:50%;background:#fff"></div>
</body></html>
